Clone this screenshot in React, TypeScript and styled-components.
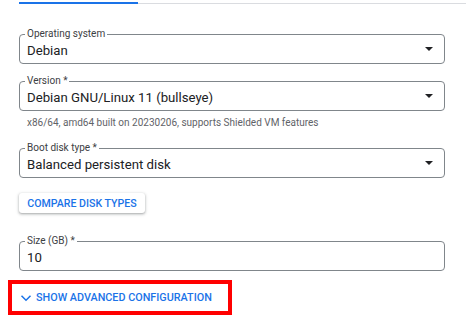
import React from "react";
import styled, { createGlobalStyle } from "styled-components";

const Global = createGlobalStyle`
  html, body { margin: 0; padding: 0; background: #ffffff; }
  body { font-family: Roboto, "Liberation Sans", Arial, sans-serif; color: #202124; }
`;

const Page = styled.div`
  width: 474px;
  height: 331px;
  overflow: hidden;
  display: flex;
  flex-direction: column;
`;

const TabBar = styled.div`
  position: relative;
  height: 3px;
  margin: 0 8px 0 19px;
  border-bottom: 1px solid #dadce0;
`;

const TabIndicator = styled.div`
  position: absolute;
  left: 0;
  bottom: -1px;
  width: 119px;
  height: 2px;
  background: #1a73e8;
`;

const Form = styled.div`
  display: flex;
  flex-direction: column;
  padding: 30px 29px 0 19px;
`;

const Field = styled.div<{ $mt?: number }>`
  position: relative;
  box-sizing: border-box;
  height: 30px;
  margin-top: ${(p) => p.$mt ?? 0}px;
  border: 1px solid #80868b;
  border-radius: 4px;
  display: flex;
  align-items: center;
  padding: 3px 11px 0 7px;
`;

const Label = styled.span`
  position: absolute;
  top: -7px;
  left: 5px;
  padding: 0 2px;
  background: #ffffff;
  font-size: 10px;
  line-height: 12px;
  color: #3c4043;
  white-space: nowrap;
`;

const Value = styled.span`
  flex: 1;
  font-size: 13.2px;
  line-height: 16px;
  color: #202124;
  white-space: nowrap;
`;

const Caret = styled.span`
  width: 0;
  height: 0;
  border-left: 4px solid transparent;
  border-right: 4px solid transparent;
  border-top: 4px solid #202124;
  margin-top: -3px;
`;

const Hint = styled.div`
  margin: 6px 0 0 8px;
  font-size: 10px;
  line-height: 12px;
  color: #5f6368;
  white-space: nowrap;
`;

const RaisedButton = styled.button`
  align-self: flex-start;
  margin-top: 15px;
  height: 20px;
  width: 126px;
  padding: 0;
  border: none;
  border-radius: 3px;
  background: #ffffff;
  box-shadow: 0 1px 2px rgba(60, 64, 67, 0.3), 0 1px 3px 1px rgba(60, 64, 67, 0.15);
  font-family: Roboto, "Liberation Sans", Arial, sans-serif;
  font-size: 10.6px;
  font-weight: 500;
  color: #1a73e8;
  letter-spacing: 0;
`;

const Highlight = styled.div`
  align-self: flex-start;
  margin: 9px 0 0 -11px;
  box-sizing: border-box;
  width: 224px;
  height: 35px;
  border: 4px solid #ff0000;
  display: flex;
  align-items: center;
  padding-left: 8px;
`;

const TextButton = styled.button`
  display: flex;
  align-items: center;
  gap: 4px;
  padding: 0;
  border: none;
  background: none;
  font-family: Roboto, "Liberation Sans", Arial, sans-serif;
  font-size: 10.8px;
  font-weight: 500;
  color: #1a73e8;
  white-space: nowrap;
`;

const Chevron = () => (
  <svg width="12" height="12" viewBox="0 0 24 24" fill="none" stroke="#1a73e8" strokeWidth="3">
    <path d="M3 7.5l9 9 9-9" />
  </svg>
);

export default function App() {
  return (
    <Page>
      <Global />
      <TabBar>
        <TabIndicator />
      </TabBar>
      <Form>
        <Field>
          <Label>Operating system</Label>
          <Value>Debian</Value>
          <Caret />
        </Field>
        <Field $mt={17}>
          <Label>Version *</Label>
          <Value>Debian GNU/Linux 11 (bullseye)</Value>
          <Caret />
        </Field>
        <Hint>x86/64, amd64 built on 20230206, supports Shielded VM features</Hint>
        <Field $mt={19}>
          <Label>Boot disk type *</Label>
          <Value>Balanced persistent disk</Value>
          <Caret />
        </Field>
        <RaisedButton>COMPARE DISK TYPES</RaisedButton>
        <Field $mt={28}>
          <Label>Size (GB) *</Label>
          <Value>10</Value>
        </Field>
        <Highlight>
          <TextButton>
            <Chevron />
            SHOW ADVANCED CONFIGURATION
          </TextButton>
        </Highlight>
      </Form>
    </Page>
  );
}
